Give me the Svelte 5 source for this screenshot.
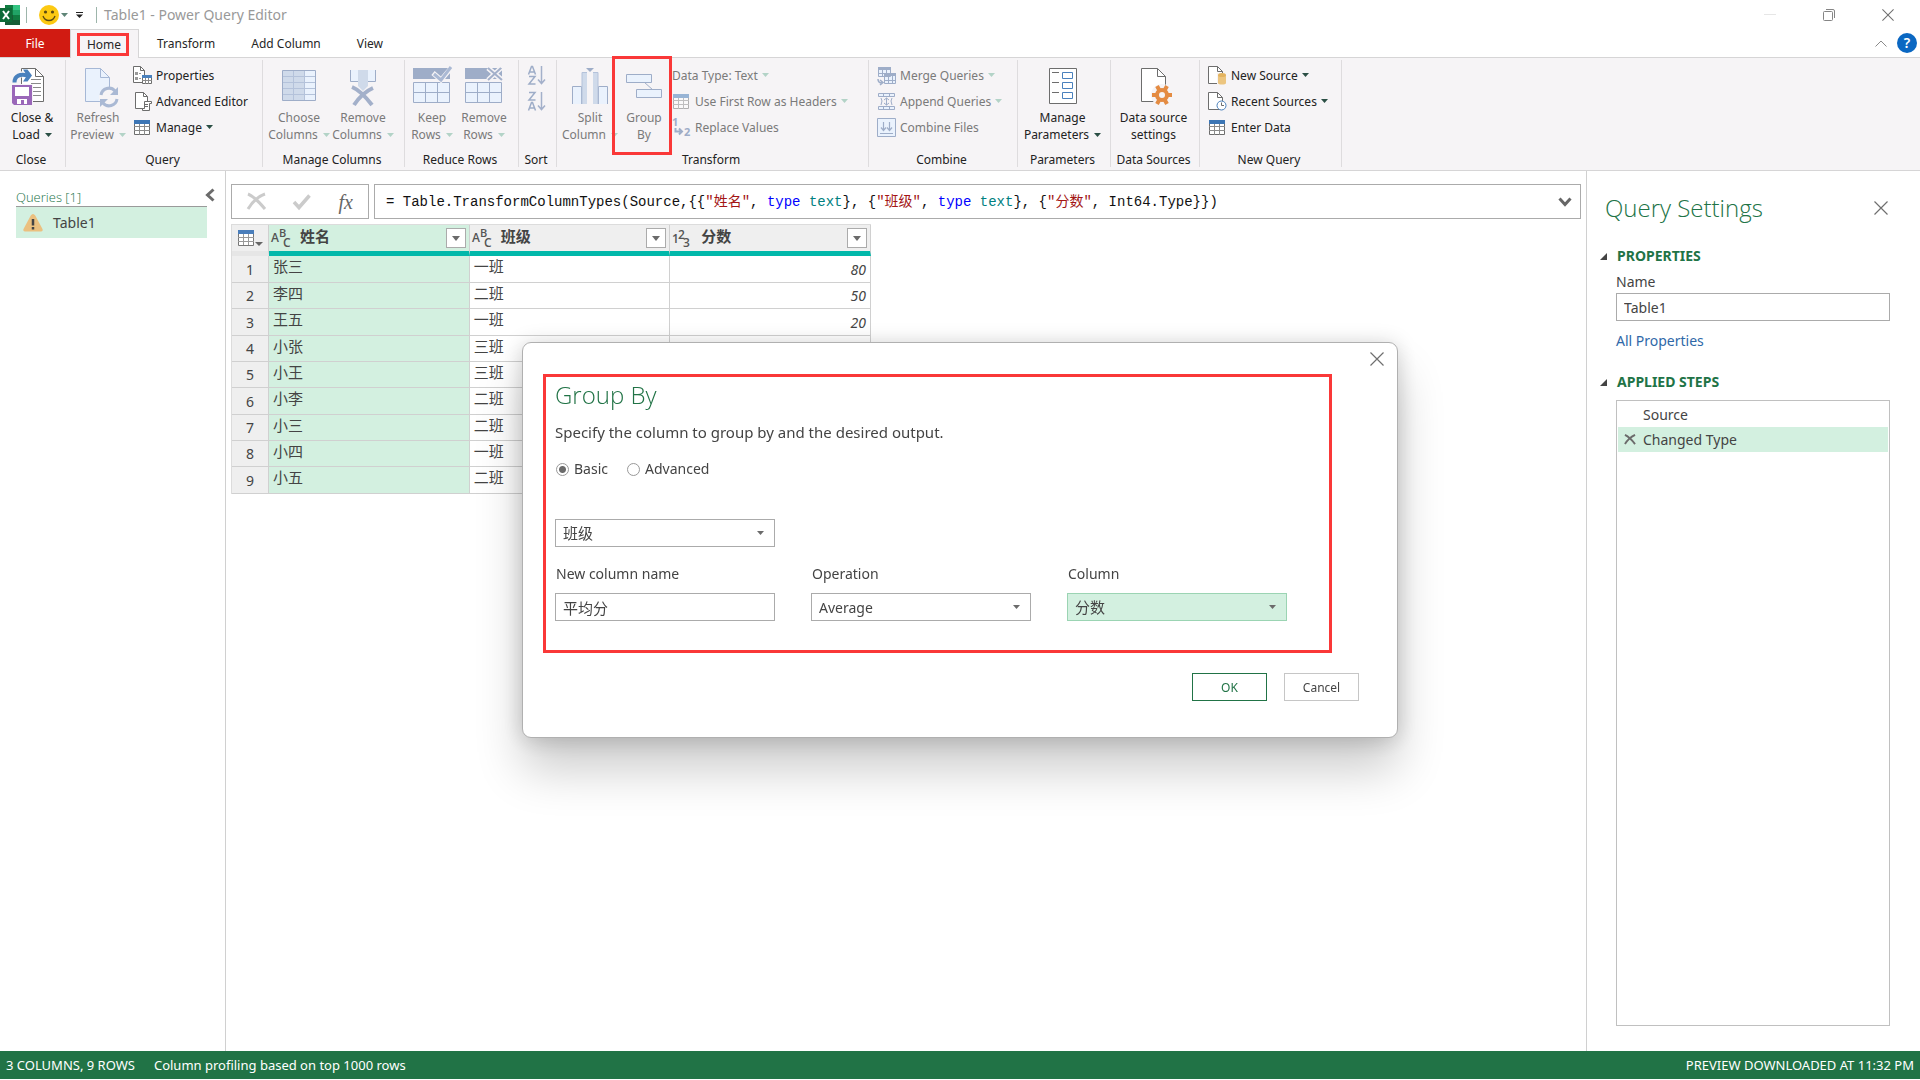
<script>
  const groups = [
    {
      id: 'close', label: 'Close',
      big: [{icon: 'close-load', lines: ['Close &', 'Load'], menu: true}]
    },
    {
      id: 'query', label: 'Query',
      big: [{icon: 'refresh', lines: ['Refresh', 'Preview'], menu: true, off: true}],
      small: [
        {icon: 'properties', text: 'Properties'},
        {icon: 'editor', text: 'Advanced Editor'},
        {icon: 'table', text: 'Manage', menu: true}
      ]
    },
    {
      id: 'columns', label: 'Manage Columns',
      big: [
        {icon: 'choose-columns', lines: ['Choose', 'Columns'], menu: true, off: true},
        {icon: 'remove-columns', lines: ['Remove', 'Columns'], menu: true, off: true}
      ]
    },
    {
      id: 'rows', label: 'Reduce Rows',
      big: [
        {icon: 'keep-rows', lines: ['Keep', 'Rows'], menu: true, off: true},
        {icon: 'remove-rows', lines: ['Remove', 'Rows'], menu: true, off: true}
      ]
    },
    {
      id: 'sort', label: 'Sort',
      small: [
        {icon: 'sort-asc', title: 'Sort ascending', off: true},
        {icon: 'sort-desc', title: 'Sort descending', off: true}
      ]
    },
    {
      id: 'transform', label: 'Transform',
      big: [
        {icon: 'split', lines: ['Split', 'Column'], menu: true, off: true},
        {icon: 'group', lines: ['Group', 'By'], off: true, marked: true}
      ],
      small: [
        {text: 'Data Type: Text', menu: true, off: true},
        {icon: 'first-row', text: 'Use First Row as Headers', menu: true, off: true},
        {icon: 'replace', text: 'Replace Values', off: true}
      ]
    },
    {
      id: 'combine', label: 'Combine',
      small: [
        {icon: 'merge', text: 'Merge Queries', menu: true, off: true},
        {icon: 'append', text: 'Append Queries', menu: true, off: true},
        {icon: 'combine', text: 'Combine Files', off: true}
      ]
    },
    {
      id: 'parameters', label: 'Parameters',
      big: [{icon: 'parameters', lines: ['Manage', 'Parameters'], menu: true}]
    },
    {
      id: 'sources', label: 'Data Sources',
      big: [{icon: 'source-settings', lines: ['Data source', 'settings']}]
    },
    {
      id: 'new', label: 'New Query',
      small: [
        {icon: 'new-source', text: 'New Source', menu: true},
        {icon: 'recent', text: 'Recent Sources', menu: true},
        {icon: 'table', text: 'Enter Data'}
      ]
    }
  ];

  const tabs = ['Transform', 'Add Column', 'View'];

  const columns = [
    {name: '姓名', type: 'text'},
    {name: '班级', type: 'text'},
    {name: '分数', type: 'number'}
  ];

  const rows = [
    ['张三', '一班', 80],
    ['李四', '二班', 50],
    ['王五', '一班', 20],
    ['小张', '三班'],
    ['小王', '三班'],
    ['小李', '二班'],
    ['小三', '二班'],
    ['小四', '一班'],
    ['小五', '二班']
  ];

  const steps = ['Source', 'Changed Type'];
  let currentStep = $state('Changed Type');

  let queryName = $state('Table1');
  let mode = $state('basic');
  let groupColumn = $state('班级');
  let newColumn = $state('平均分');
  let operation = $state('Average');
  let valueColumn = $state('分数');
</script>

{#snippet caret()}
  <svg class="caret" width="7" height="4" viewBox="0 0 7 4"><path d="M0 0h7L3.5 4z" fill="currentColor" /></svg>
{/snippet}

{#snippet cross(size)}
  <svg width={size} height={size} viewBox="0 0 14 14"><path d="M.5.5l13 13M13.5.5l-13 13" stroke="#6f6f6f" stroke-width="1.2" fill="none" /></svg>
{/snippet}

{#snippet bigIcon(name)}
  <svg class="big-icon" width="40" height="40" viewBox="0 0 40 40" fill="none">
    {#if name === 'close-load'}
      <path d="M9.500 1.500h14l8 8v25h-22z" fill="#fff" stroke="#6d6d6d" />
      <path d="M23.500 1.500v8h8" stroke="#6d6d6d" />
      <path d="M19 12.500h10M19 16.500h10M20 20.500h9M21 24.500h8M21 28.500h8" stroke="#8a8a8a" />
      <path d="M3 15c0-7 6-9 13-7" stroke="#f6f4f6" stroke-width="6" />
      <path d="M2.500 15.500c0-7 6-9 13-7" stroke="#4a81bd" stroke-width="4" />
      <path d="M11 2.500h4.500l4.500 6-4.500 6H11l4-6z" fill="#4a81bd" />
      <path d="M-1 17h22v22H-1z" fill="#f6f4f6" />
      <path d="M0 18h20v20H2l-2-2z" fill="#9a67b9" />
      <path d="M3 20h14v9H3zM5 32h10v5H5z" fill="#fff" />
      <path d="M9 33h3v4H9z" fill="#9a67b9" />
    {:else if name === 'refresh'}
      <path d="M7.500 1.500h15l9 9v24h-24z" fill="#eaf2fd" stroke="#a6b8d6" />
      <path d="M22.500 1.500v9h9" stroke="#a6b8d6" />
      <circle cx="31" cy="30" r="10" fill="#f6f4f6" />
      <path d="M23 28a8 8 0 0 1 14-4M39 32a8 8 0 0 1-14 4" stroke="#aab9d4" stroke-width="3" />
      <path d="M40 20v8h-8zM22 40v-8h8z" fill="#aab9d4" />
    {:else if name === 'choose-columns'}
      <path d="M3.500 3.500h33v30h-33z" fill="#eaf2fd" />
      <path d="M3.500 3.500h22v30h-22z" fill="#cfdaea" />
      <path d="M3.500 9.500h33M3.500 15.500h33M3.500 21.500h33M3.500 27.500h33M14.500 3.500v30M25.500 3.500v30" stroke="#b4c2da" />
      <path d="M3.500 3.500h33v30h-33z" stroke="#9eadc8" />
    {:else if name === 'remove-columns'}
      <path d="M7.500 3v11.500h8V3M24.500 3v11.500h8V3" fill="#eaf2fd" stroke="#9eadc8" />
      <path d="M15 3h10v16l-5 5-5-5z" fill="#cfdaea" />
      <path d="M9 20c5 2 13 9 20 18M30 21c-7 3-13 8-19 17" stroke="#a3b0ca" stroke-width="4" />
    {:else if name === 'keep-rows' || name === 'remove-rows'}
      <path d="M1 1h37v11H1z" fill="#9eadc8" />
      <path d="M1.500 15.500h36v20h-36z" fill="#eaf2fd" stroke="#9eadc8" />
      <path d="M13.500 15.500v20M25.500 15.500v20M1.500 25.500h36" stroke="#9eadc8" />
      {#if name === 'keep-rows'}
        <path d="M21 6l8 7L40 0" stroke="#f6f4f6" stroke-width="5" />
        <path d="M22 7l7 6L39 0" stroke="#aab9d4" stroke-width="3" />
      {:else}
        <path d="M24 1l14 12M37 1L24 13" stroke="#f6f4f6" stroke-width="5" />
        <path d="M24 1l14 12M37 1L24 13" stroke="#a3b0ca" stroke-width="2" />
      {/if}
    {:else if name === 'split'}
      <path d="M2.500 37V19.500h9V37M28.500 37V19.500h9V37" fill="#eaf2fd" stroke="#9eadc8" />
      <path d="M12 5h5v32h-5zM23 5h5v32h-5z" fill="#cfdaea" />
      <path d="M12 37V5.500h5M28 37V5.500h-5" stroke="#b4c2da" />
      <path d="M16 1h8l-4 4z" fill="#9eadc8" />
    {:else if name === 'group'}
      <path d="M20 15l9 8" stroke="#9eadc8" />
      <path d="M2.500 7.500h25v8h-25zM12.500 22.500h25v8h-25z" fill="#eaf2fd" stroke="#9eadc8" />
    {:else if name === 'parameters'}
      <path d="M6.500 1.500h27v35h-27z" fill="#fff" stroke="#6d6d6d" />
      <path d="M9 5.500h7M9 15.500h7M9 25.500h7" stroke="#6d6d6d" />
      <path d="M19.500 5.500h10v6h-10zM19.500 15.500h10v6h-10zM19.500 25.500h10v6h-10z" stroke="#4a81bd" />
    {:else if name === 'source-settings'}
      <path d="M7.500 1.500h16l8 8v25h-24z" fill="#fff" stroke="#6d6d6d" />
      <path d="M23.500 1.500v8h8" stroke="#6d6d6d" />
      <circle cx="28" cy="28" r="11" fill="#f6f4f6" />
      <path d="M18 28h20M23 19l10 18M33 19L23 37" stroke="#e48b42" stroke-width="4" />
      <circle cx="28" cy="28" r="5" stroke="#e48b42" stroke-width="4" fill="#f6f4f6" />
    {/if}
  </svg>
{/snippet}

{#snippet smallIcon(name)}
  <svg class="small-icon" width="19" height="19" viewBox="0 0 19 19" fill="none">
    {#if name === 'properties'}
      <path d="M.5 .5h7l4 4v12H.500z" fill="#fff" stroke="#6d6d6d" />
      <path d="M7.500 .5v4h4" stroke="#6d6d6d" />
      <path d="M2 6h3v3H2zM2 11h3v3H2z" fill="#999" />
      <path d="M6 7.500h2M6 12.500h2" stroke="#999" />
      <path d="M9.500 9.500h9v8h-9z" fill="#fff" stroke="#6d6d6d" />
      <path d="M9 9h10v3H9z" fill="#4a81bd" />
      <path d="M12.500 12v6M15.500 12v6M9 14.500h10" stroke="#8a8a8a" />
    {:else if name === 'editor'}
      <path d="M2.500 .5h8l4 4v12h-12z" fill="#fff" stroke="#6d6d6d" />
      <path d="M10.500 .5v4h4" stroke="#6d6d6d" />
      <path d="M11.500 9.500h7v2h-2v7h-7v-2h2z" fill="#fff" stroke="#6d6d6d" />
      <path d="M12 12.500h3M12 14.500h3" stroke="#6d6d6d" />
    {:else if name === 'table' || name === 'first-row'}
      <g class:faded={name === 'first-row'}>
        <path d="M1.500 2.500h15v14h-15z" fill="#fff" stroke="#6d6d6d" />
        <path d="M6.500 5v12M11.500 5v12M1 8.500h16M1 12.500h16" stroke="#8a8a8a" />
        <path d="M1 2h16v4H1z" fill="#3d76b5" />
      </g>
    {:else if name === 'sort-asc'}
      <path d="M1.500 8.500L4.500 .5h1l3 8M2.500 6h5M2 10.500h6l-6 7.500h6.500" stroke="#9eadc8" stroke-width="1.500" />
      <path d="M14.500 0v17M11 13.500l3.500 4 3.500-4" stroke="#a3b0ca" stroke-width="1.500" />
    {:else if name === 'sort-desc'}
      <path d="M1.500 18.500l3-8h1l3 8M2.500 16h5M2 .5h6L2 8h6.500" stroke="#9eadc8" stroke-width="1.500" />
      <path d="M14.500 0v17M11 13.500l3.500 4 3.500-4" stroke="#a3b0ca" stroke-width="1.500" />
    {:else if name === 'replace'}
      <text x="0" y="8" class="digit">1</text>
      <text x="12" y="18" class="digit">2</text>
      <path d="M3.500 10v3.500H9M7 10.500l3 3-3 3" stroke="#9eadc8" stroke-width="2" />
    {:else if name === 'merge'}
      <path d="M1.500 1.500h12v9h-12zM7.500 7.500h11v10h-11z" fill="#eaf2fd" stroke="#9eadc8" />
      <path d="M1 1h13v3H1zM7 7h12v3H7z" fill="#9eadc8" />
      <path d="M5.500 4v6M9.500 4v3M1 7.500h6M11.500 10v8M15.500 10v8M7 14.500h12" stroke="#9eadc8" />
      <path d="M1 13c0 3 2 4 4 4M3 14l3 2.500-3 2.500" stroke="#9eadc8" stroke-width="1.500" />
    {:else if name === 'append'}
      <path d="M1.500 1.500h16v3h-16zM1.500 14.500h16v3h-16z" fill="#eaf2fd" stroke="#9eadc8" />
      <path d="M6.500 1v4M12.500 1v4M6.500 14v4M12.500 14v4M9.500 6v7M7 8l2.500-2L12 8M7 11l2.500 2 2.500-2M4 6l1 3-1 4M15 6l-1 3 1 4" stroke="#9eadc8" />
    {:else if name === 'combine'}
      <path d="M.5 .5h18v18H.500z" fill="#eaf2fd" stroke="#9eadc8" />
      <path d="M6.500 4v8M4 9.500l2.500 3 2.500-3M12.500 4v8M10 9.500l2.500 3 2.500-3M3 15.500h13" stroke="#9eadc8" stroke-width="1.200" />
    {:else if name === 'new-source' || name === 'recent'}
      <path d="M.5 .5h9l5 5v12H.500z" fill="#fff" stroke="#6d6d6d" />
      <path d="M9.500 .5v5h5" stroke="#6d6d6d" />
      {#if name === 'new-source'}
        <path d="M9 7h10v12H9z" fill="#f6f4f6" />
        <path d="M10 9v8c0 2 8 2 8 0V9z" fill="#ecc57f" />
        <ellipse cx="14" cy="9" rx="4" ry="2" fill="#e3b35f" />
      {:else}
        <circle cx="13.500" cy="13.500" r="4.500" fill="#fff" stroke="#4a81bd" />
        <path d="M13.500 10.500v3h2.500" stroke="#6d6d6d" />
      {/if}
    {/if}
  </svg>
{/snippet}

<div class="window">
  <header class="titlebar">
    <svg width="20" height="20" viewBox="0 0 20 20">
      <path d="M5 0h15v20H5z" fill="#21a366" />
      <path d="M5 0h8v10H5z" fill="#107c41" />
      <path d="M13 0h7v5h-7z" fill="#33c481" />
      <path d="M5 10h8v10H5zM13 15h7v5h-7z" fill="#185c37" />
      <path d="M13 10h7v5h-7z" fill="#107c41" />
      <path d="M0 3h12v14H0z" fill="#0e6b38" />
      <path d="M3 6l6 8M9 6l-6 8" stroke="#fff" stroke-width="2" />
    </svg>
    <span class="rule"></span>
    <button class="smile" aria-label="Send feedback">
      <svg width="20" height="20" viewBox="0 0 20 20">
        <circle cx="10" cy="10" r="10" fill="#fcc912" />
        <circle cx="6.500" cy="7" r="1.600" fill="#5b4a12" />
        <circle cx="13.500" cy="7" r="1.600" fill="#5b4a12" />
        <path d="M4 11c2 6 10 6 12 0" fill="none" stroke="#5b4a12" stroke-width="1.300" />
      </svg>
      {@render caret()}
    </button>
    <button class="customize" aria-label="Customize toolbar">
      <svg width="7" height="6" viewBox="0 0 7 6"><path d="M0 .5h7" stroke="#222" /><path d="M0 2.500h7L3.500 6z" fill="#222" /></svg>
    </button>
    <span class="rule"></span>
    <h1>Table1 - Power Query Editor</h1>
    <div class="window-buttons">
      <button aria-label="Minimize"><svg width="12" height="12" viewBox="0 0 12 12"><path d="M0 5.500h12" stroke="#e6e6e6" /></svg></button>
      <button aria-label="Restore"><svg width="12" height="13" viewBox="0 0 12 13" fill="none" stroke="#858585"><rect x=".5" y="3.500" width="9" height="9" rx="1" /><path d="M3 1.500h7a1.500 1.500 0 0 1 1.500 1.500v7" /></svg></button>
      <button aria-label="Close">{@render cross(12)}</button>
    </div>
  </header>

  <nav class="tabs">
    <button class="file">File</button>
    <button class="home"><span class="marked">Home</span></button>
    {#each tabs as tab}
      <button class="tab">{tab}</button>
    {/each}
    <div class="tab-tools">
      <button aria-label="Collapse the ribbon"><svg width="12" height="7" viewBox="0 0 12 7"><path d="M.5 6.500L6 1l5.500 5.500" fill="none" stroke="#8a8a8a" /></svg></button>
      <button class="help" aria-label="Help">?</button>
    </div>
  </nav>

  <div class="ribbon">
    {#each groups as group}
      <section class="group {group.id}">
        <div class="tools">
          {#each group.big ?? [] as item}
            <button class="big" class:off={item.off} class:marked={item.marked}>
              {@render bigIcon(item.icon)}
              <span>{item.lines[0]}</span>
              <span>{item.lines[1]}{#if item.menu}{@render caret()}{/if}</span>
            </button>
          {/each}
          {#if group.small}
            <div class="stack">
              {#each group.small as item}
                <button class="small" class:off={item.off} aria-label={item.title}>
                  {#if item.icon}{@render smallIcon(item.icon)}{/if}
                  {#if item.text}<span>{item.text}</span>{/if}
                  {#if item.menu}{@render caret()}{/if}
                </button>
              {/each}
            </div>
          {/if}
        </div>
        <h2>{group.label}</h2>
      </section>
    {/each}
  </div>

  <main>
    <aside class="queries">
      <div class="queries-head">
        <h2>Queries [1]</h2>
        <button aria-label="Collapse queries"><svg width="10" height="14" viewBox="0 0 10 14"><path d="M8.500 1.500L2.500 7l6 5.500" fill="none" stroke="#6b6b6b" stroke-width="3" /></svg></button>
      </div>
      <button class="query-item">
        <svg width="20" height="18" viewBox="0 0 20 18"><path d="M10 0c1 0 2 1 2.500 2L19.500 15c.5 1.500 0 2.500-1.500 2.500H2C.5 17.500 0 16.500.5 15L7.500 2C8 1 9 0 10 0z" fill="#ebc07f" /><path d="M10 5v6.500M10 13v2.500" stroke="#444" stroke-width="2.500" /></svg>
        Table1
      </button>
    </aside>

    <section class="editor">
      <div class="formula-row">
        <div class="formula-buttons">
          <button aria-label="Cancel formula"><svg width="19" height="17" viewBox="0 0 19 17"><path d="M1 1c5 2 12 9 17 15M18 1C12 3 6 8 1 16" fill="none" stroke="#cbcbcb" stroke-width="3" /></svg></button>
          <button aria-label="Accept formula"><svg width="18" height="16" viewBox="0 0 18 16"><path d="M1 8l5 5.500L16.500 1.500" fill="none" stroke="#cbcbcb" stroke-width="3.500" /></svg></button>
          <button class="fx">fx</button>
        </div>
        <div class="formula">
          <code>= Table.TransformColumnTypes(Source,&#123;&#123;<i class="str">"姓名"</i>, <i class="kw">type</i> <i class="ty">text</i>&#125;, &#123;<i class="str">"班级"</i>, <i class="kw">type</i> <i class="ty">text</i>&#125;, &#123;<i class="str">"分数"</i>, Int64.Type&#125;&#125;)</code>
          <button aria-label="Expand formula bar"><svg width="14" height="10" viewBox="0 0 14 10"><path d="M1.500 1.500L7 7.500l5.500-6" fill="none" stroke="#666" stroke-width="3" /></svg></button>
        </div>
      </div>

      <table>
        <thead>
          <tr>
            <th class="corner">
              <button aria-label="Table menu">
                <svg width="25" height="17" viewBox="0 0 25 17"><path d="M.5 .5h15v15H.500z" fill="#fff" stroke="#777" /><path d="M5.500 3v12M10.500 3v12M0 7.500h16M0 11.500h16" stroke="#999" /><path d="M0 0h16v4H0z" fill="#4a7ebb" /><path d="M17 12h8l-4 4z" fill="#666" /></svg>
              </button>
            </th>
            {#each columns as column, i}
              <th class:selected={i === 0}>
                <div class="column-head">
                  <svg width="20" height="18" viewBox="0 0 20 18">
                    {#if column.type === 'text'}
                      <text x="0" y="13" class="type">A</text><text x="8" y="8" class="type raised">B</text><text x="12" y="18" class="type">C</text>
                    {:else}
                      <text x="0" y="14" class="type">1</text><text x="6" y="10" class="type">2</text><text x="11" y="18" class="type">3</text>
                    {/if}
                  </svg>
                  <span>{column.name}</span>
                  <button aria-label="Filter {column.name}"><svg width="8" height="5" viewBox="0 0 8 5"><path d="M0 0h8L4 5z" fill="#6b6b6b" /></svg></button>
                </div>
              </th>
            {/each}
          </tr>
        </thead>
        <tbody>
          {#each rows as row, i}
            <tr>
              <th>{i + 1}</th>
              <td class="selected">{row[0]}</td>
              <td>{row[1]}</td>
              <td class="number">{row[2] ?? ''}</td>
            </tr>
          {/each}
        </tbody>
      </table>
    </section>

    <aside class="settings">
      <div class="settings-head">
        <h2>Query Settings</h2>
        <button aria-label="Close query settings">{@render cross(14)}</button>
      </div>
      <h3><svg width="7" height="7" viewBox="0 0 7 7"><path d="M7 0v7H0z" fill="#444" /></svg>PROPERTIES</h3>
      <div class="properties">
        <label for="query-name">Name</label>
        <input id="query-name" type="text" bind:value={queryName} />
        <a href="#properties">All Properties</a>
      </div>
      <h3><svg width="7" height="7" viewBox="0 0 7 7"><path d="M7 0v7H0z" fill="#444" /></svg>APPLIED STEPS</h3>
      <ul class="steps">
        {#each steps as step}
          <li class:current={step === currentStep}>
            <svg width="12" height="11" viewBox="0 0 13 12"><path d="M1 1c4 2 8 6 11 10M12 1C8 3 4 6 1 11" fill="none" stroke="#6b6b6b" stroke-width="2" /></svg>
            <button onclick={() => (currentStep = step)}>{step}</button>
          </li>
        {/each}
      </ul>
    </aside>
  </main>

  <footer>
    <span>3 COLUMNS, 9 ROWS</span>
    <span>Column profiling based on top 1000 rows</span>
    <span class="right">PREVIEW DOWNLOADED AT 11:32 PM</span>
  </footer>
</div>

<div class="overlay">
  <div class="dialog" role="dialog" aria-labelledby="dialog-title">
    <div class="dialog-top">
      <button aria-label="Close dialog">{@render cross(14)}</button>
    </div>
    <section class="form">
      <h2 id="dialog-title">Group By</h2>
      <p>Specify the column to group by and the desired output.</p>
      <div class="modes">
        <label><input type="radio" value="basic" bind:group={mode} />Basic</label>
        <label><input type="radio" value="advanced" bind:group={mode} />Advanced</label>
      </div>
      <div class="select">
        <select class="cjk" aria-label="Group by column" bind:value={groupColumn}>
          {#each columns as column}<option>{column.name}</option>{/each}
        </select>
        {@render caret()}
      </div>
      <div class="fields">
        <div class="field">
          <label for="new-column">New column name</label>
          <input id="new-column" class="cjk" type="text" bind:value={newColumn} />
        </div>
        <div class="field">
          <label for="operation">Operation</label>
          <div class="select">
            <select id="operation" bind:value={operation}>
              <option>Sum</option>
              <option>Average</option>
            </select>
            {@render caret()}
          </div>
        </div>
        <div class="field">
          <label for="value-column">Column</label>
          <div class="select active">
            <select id="value-column" class="cjk" bind:value={valueColumn}>
              {#each columns as column}<option>{column.name}</option>{/each}
            </select>
            {@render caret()}
          </div>
        </div>
      </div>
    </section>
    <div class="actions">
      <button class="ok">OK</button>
      <button>Cancel</button>
    </div>
  </div>
</div>

<style>
  :global(body) {
    font-family: "Noto Sans", "Noto Sans CJK SC", sans-serif;
    font-size: 14px;
    color: #444;
    background: #fff;
  }

  h1, h2, h3, p, ul {
    margin: 0;
    padding: 0;
    font-weight: 400;
  }

  button, input, select {
    font: inherit;
    color: inherit;
    margin: 0;
    padding: 0;
    border: 0;
    border-radius: 0;
    background: none;
    box-sizing: border-box;
  }

  svg {
    display: block;
    flex: none;
    overflow: visible;
  }

  .window {
    display: flex;
    flex-direction: column;
    min-height: 100vh;
    box-sizing: border-box;
    padding-bottom: 1px;
  }

  /* title bar */
  .titlebar {
    display: flex;
    align-items: center;
    height: 29px;
  }

  .titlebar h1 {
    font-size: 14px;
    color: #999;
    margin-left: 7px;
  }

  .rule {
    width: 1px;
    height: 16px;
    background: #9db5ab;
    margin-left: 6px;
  }

  .smile {
    display: flex;
    align-items: center;
    gap: 2px;
    margin-left: 12px;
  }

  .smile .caret {
    color: #5f8577;
  }

  .customize {
    margin: 0 7px 0 8px;
  }

  .window-buttons {
    display: flex;
    gap: 47px;
    margin-left: auto;
    margin-right: 26px;
  }

  /* tabs */
  .tabs {
    display: flex;
    height: 28px;
    font-size: 12px;
    color: #262626;
    border-bottom: 1px solid #d6d5d6;
  }

  .file {
    width: 70px;
    color: #fff;
    background: #d11b12;
  }

  .home {
    width: 69px;
    height: 29px;
    padding-right: 3px;
    background: #f6f4f6;
    border: 1px solid #d6d5d6;
    border-bottom: 0;
  }

  .marked {
    outline: 3px solid #fa3838;
  }

  .home .marked {
    display: inline-block;
    padding: 0 5px 0 7px;
    line-height: 17px;
  }

  .tab {
    padding: 0 18px;
  }

  .tab-tools {
    display: flex;
    align-items: center;
    gap: 10px;
    margin-left: auto;
    margin-right: 3px;
  }

  .help {
    width: 20px;
    height: 20px;
    border-radius: 50%;
    background: #0a67c2;
    color: #fff;
    font-size: 14px;
    font-weight: 600;
    line-height: 20px;
  }

  /* ribbon */
  .ribbon {
    display: flex;
    padding: 2px 0 3px;
    background: #f6f4f6;
    border-bottom: 1px solid #d6d5d6;
    font-size: 12px;
    color: #222;
  }

  .group {
    box-sizing: border-box;
    height: 107px;
    padding-right: 3px;
    border-right: 1px solid #dedcde;
  }

  .close { width: 66px; }
  .query { width: 197px; }
  .columns { width: 142px; }
  .rows { width: 114px; }
  .sort { width: 38px; }
  .transform { width: 312px; }
  .combine { width: 149px; }
  .parameters { width: 93px; }
  .sources { width: 89px; }
  .new { width: 142px; }

  .group h2 {
    font-size: 12px;
    line-height: 18px;
    text-align: center;
    white-space: nowrap;
  }

  .tools {
    display: flex;
    height: 91px;
  }

  .big {
    display: flex;
    flex: none;
    flex-direction: column;
    align-items: center;
    width: 64px;
    padding-top: 7px;
    line-height: 17px;
  }

  .big-icon {
    margin-bottom: 2px;
  }

  .big span {
    display: flex;
    align-items: center;
    gap: 5px;
    white-space: nowrap;
  }

  .caret {
    color: #2b4f45;
  }

  .off {
    color: #7a7a7a;
  }

  .off .caret {
    color: #b3d3c7;
  }

  .columns .tools {
    padding-left: 4px;
  }

  .rows .tools {
    padding-left: 1px;
  }

  .rows .big {
    width: 52px;
  }

  .transform .tools {
    padding-left: 1px;
  }

  .transform .marked {
    width: 54px;
    height: 93px;
    margin: -1px 3px 0 -7px;
    padding: 8px 0 0 4px;
  }

  .parameters .big, .sources .big {
    width: 100%;
  }

  .stack {
    display: flex;
    flex-direction: column;
    padding-top: 2px;
  }

  .small {
    display: flex;
    align-items: center;
    gap: 4px;
    height: 26px;
    white-space: nowrap;
  }

  .query .stack {
    padding-left: 3px;
  }

  .sort .stack, .combine .stack, .new .stack {
    padding-left: 8px;
  }

  .faded {
    opacity: 0.5;
  }

  .digit {
    font-size: 11px;
    font-weight: 700;
    fill: #9eadc8;
  }

  /* work area */
  main {
    display: flex;
    flex: 1;
  }

  .queries {
    box-sizing: border-box;
    width: 226px;
    padding: 14px 10px 0 16px;
    border-right: 1px solid #d0d0d0;
  }

  .queries-head {
    display: flex;
    justify-content: space-between;
    align-items: flex-start;
  }

  .queries-head h2 {
    font-family: "Open Sans", sans-serif;
    font-size: 13px;
    font-weight: 300;
    line-height: 24px;
    color: #217346;
  }

  .queries-head button {
    padding-top: 3px;
  }

  .query-item {
    display: flex;
    align-items: center;
    gap: 10px;
    width: 191px;
    height: 32px;
    padding-left: 7px;
    margin-top: -3px;
    background: #d3f0e0;
    border-top: 1px solid #9a9a9a;
  }

  .editor {
    flex: 1;
    min-width: 0;
    padding: 13px 5px 0 5px;
  }

  .formula-row {
    display: flex;
    gap: 5px;
  }

  .formula-buttons, .formula {
    display: flex;
    align-items: center;
    box-sizing: border-box;
    height: 35px;
    border: 1px solid #ababab;
  }

  .formula-buttons {
    width: 138px;
    padding: 0 15px;
    justify-content: space-between;
  }

  .fx {
    font-family: "Liberation Serif", serif;
    font-style: italic;
    font-size: 20px;
    line-height: 20px;
    color: #666;
  }

  .formula {
    flex: 1;
    justify-content: space-between;
    padding: 0 8px 0 11px;
  }

  code {
    font-family: "Liberation Mono", "Noto Sans CJK SC", monospace;
    font-size: 14px;
    padding-bottom: 4px;
    color: #111;
    white-space: pre;
  }

  code i {
    font-style: normal;
  }

  .str { color: #a31515; }
  .kw { color: #0000ff; }
  .ty { color: #008080; }

  /* data grid */
  table {
    table-layout: fixed;
    width: 640px;
    margin-top: 5px;
    border-collapse: separate;
    border-spacing: 0;
    border-top: 1px solid #dcdcdc;
    border-left: 1px solid #dcdcdc;
  }

  table th, table td {
    box-sizing: border-box;
    height: 26px;
    padding: 0;
    border-right: 1px solid #d0d0d0;
    border-bottom: 1px solid #d0d0d0;
    font-weight: 400;
    line-height: 24px;
  }

  tbody tr:first-child > *, tbody tr:nth-child(3n) > * {
    height: 27px;
  }

  thead th {
    height: 31px;
    background: #efefef;
    border-bottom: 5px solid #01b8aa;
  }

  thead .corner {
    width: 37px;
    border-bottom: 5px solid #e6e6e6;
  }

  .corner button {
    display: block;
    margin-left: 6px;
  }

  .column-head {
    display: flex;
    align-items: center;
    padding: 0 3px 0 2px;
  }

  .column-head span {
    margin-left: 9px;
    padding-bottom: 4px;
    font-size: 15px;
    font-weight: 700;
    line-height: 20px;
  }

  .column-head button {
    display: flex;
    align-items: center;
    justify-content: center;
    width: 20px;
    height: 20px;
    margin-left: auto;
    background: #fff;
    border: 1px solid #ababab;
  }

  .type {
    font-family: "Open Sans", sans-serif;
    font-size: 12px;
    font-weight: 600;
    fill: #555;
  }

  .raised {
    font-size: 11px;
  }

  tbody th {
    background: #efefef;
    text-align: center;
    vertical-align: bottom;
  }

  tbody td {
    padding-left: 4px;
    font-size: 15px;
    line-height: 20px;
    vertical-align: top;
  }

  tbody .number {
    padding-right: 4px;
    font-size: 14px;
    font-style: italic;
    line-height: 24px;
    text-align: right;
    vertical-align: bottom;
  }

  table .selected {
    background: #d3f0e0;
  }

  /* query settings */
  .settings {
    display: flex;
    flex-direction: column;
    box-sizing: border-box;
    width: 334px;
    padding: 17px 30px 25px 13px;
    border-left: 1px solid #d0d0d0;
  }

  .settings-head {
    display: flex;
    align-items: center;
    justify-content: space-between;
    padding-left: 5px;
    padding-right: 2px;
  }

  .settings-head h2 {
    font-family: "Open Sans", sans-serif;
    font-size: 24px;
    font-weight: 300;
    line-height: 40px;
    color: #217346;
  }

  .settings h3 {
    display: flex;
    align-items: center;
    gap: 10px;
    margin-top: 18px;
    font-size: 14px;
    font-weight: 700;
    line-height: 20px;
    color: #217346;
  }

  .properties {
    display: flex;
    flex-direction: column;
    margin-left: 16px;
    padding: 4px 0 3px;
  }

  .properties label {
    line-height: 23px;
  }

  .properties a {
    margin-top: 10px;
    line-height: 20px;
    color: #2f68a8;
    text-decoration: none;
  }

  input[type="text"] {
    width: 100%;
    height: 28px;
    padding: 0 7px;
    border: 1px solid #ababab;
  }

  .steps {
    flex: 1;
    margin: 8px 0 0 16px;
    padding: 1px;
    border: 1px solid #c0c0c0;
    list-style: none;
  }

  .steps li {
    display: flex;
    align-items: center;
    gap: 7px;
    height: 25px;
    padding-left: 6px;
  }

  .steps li svg {
    visibility: hidden;
  }

  .steps .current {
    background: #d3f0e0;
  }

  .steps .current svg {
    visibility: visible;
  }

  /* status bar */
  footer {
    display: flex;
    align-items: center;
    gap: 19px;
    height: 28px;
    padding: 0 6px;
    font-size: 13px;
    color: #fff;
    background: #217346;
  }

  .right {
    margin-left: auto;
  }

  /* group by dialog */
  .overlay {
    position: fixed;
    inset: 0;
    display: flex;
    align-items: center;
    justify-content: center;
  }

  .dialog {
    box-sizing: border-box;
    width: 876px;
    padding: 0 0 36px 20px;
    background: #fff;
    border: 1px solid #b0b0b0;
    border-radius: 9px;
    box-shadow: 0 32px 48px rgba(0, 0, 0, 0.2), 0 2px 21px rgba(0, 0, 0, 0.18);
  }

  .dialog-top {
    display: flex;
    justify-content: flex-end;
    height: 31px;
    padding-right: 13px;
  }

  .form {
    box-sizing: border-box;
    width: 789px;
    height: 279px;
    padding: 0 9px;
    border: 3px solid #fa3838;
  }

  .form h2 {
    font-family: "Open Sans", sans-serif;
    font-size: 24px;
    font-weight: 300;
    line-height: 36px;
    color: #217346;
  }

  .form p {
    margin-top: 8px;
    font-size: 15px;
    line-height: 22px;
  }

  .modes {
    display: flex;
    gap: 18px;
    margin-top: 16px;
  }

  .modes label {
    display: flex;
    align-items: center;
    gap: 5px;
    line-height: 20px;
  }

  input[type="radio"] {
    appearance: none;
    width: 13px;
    height: 13px;
    margin-left: 1px;
    border: 1px solid #999;
    border-radius: 50%;
  }

  input[type="radio"]:checked {
    background: radial-gradient(#6b6b6b 3px, #fff 4px);
  }

  .select {
    display: grid;
    align-items: center;
    width: 220px;
    background: #fff;
  }

  .modes + .select {
    margin-top: 40px;
  }

  .select select {
    appearance: none;
    grid-area: 1 / 1;
    width: 100%;
    height: 28px;
    padding: 0 7px;
    border: 1px solid #ababab;
  }

  .select .caret {
    grid-area: 1 / 1;
    justify-self: end;
    margin-right: 11px;
    color: #6b6b6b;
    pointer-events: none;
  }

  .dialog .cjk {
    font-size: 15px;
  }

  .active {
    background: #d3f0e0;
  }

  .select.active select {
    border-color: #9bd4b3;
  }

  .fields {
    display: flex;
    gap: 36px;
    margin-top: 16px;
  }

  .field {
    width: 220px;
  }

  .field label {
    display: block;
    padding-left: 1px;
    line-height: 22px;
    margin-bottom: 8px;
  }

  .actions {
    display: flex;
    justify-content: flex-end;
    gap: 17px;
    margin-top: 20px;
    padding-right: 38px;
  }

  .actions button {
    width: 75px;
    height: 28px;
    font-size: 12px;
    border: 1px solid #c6c6c6;
  }

  .actions .ok {
    color: #217346;
    border-color: #217346;
  }
</style>
